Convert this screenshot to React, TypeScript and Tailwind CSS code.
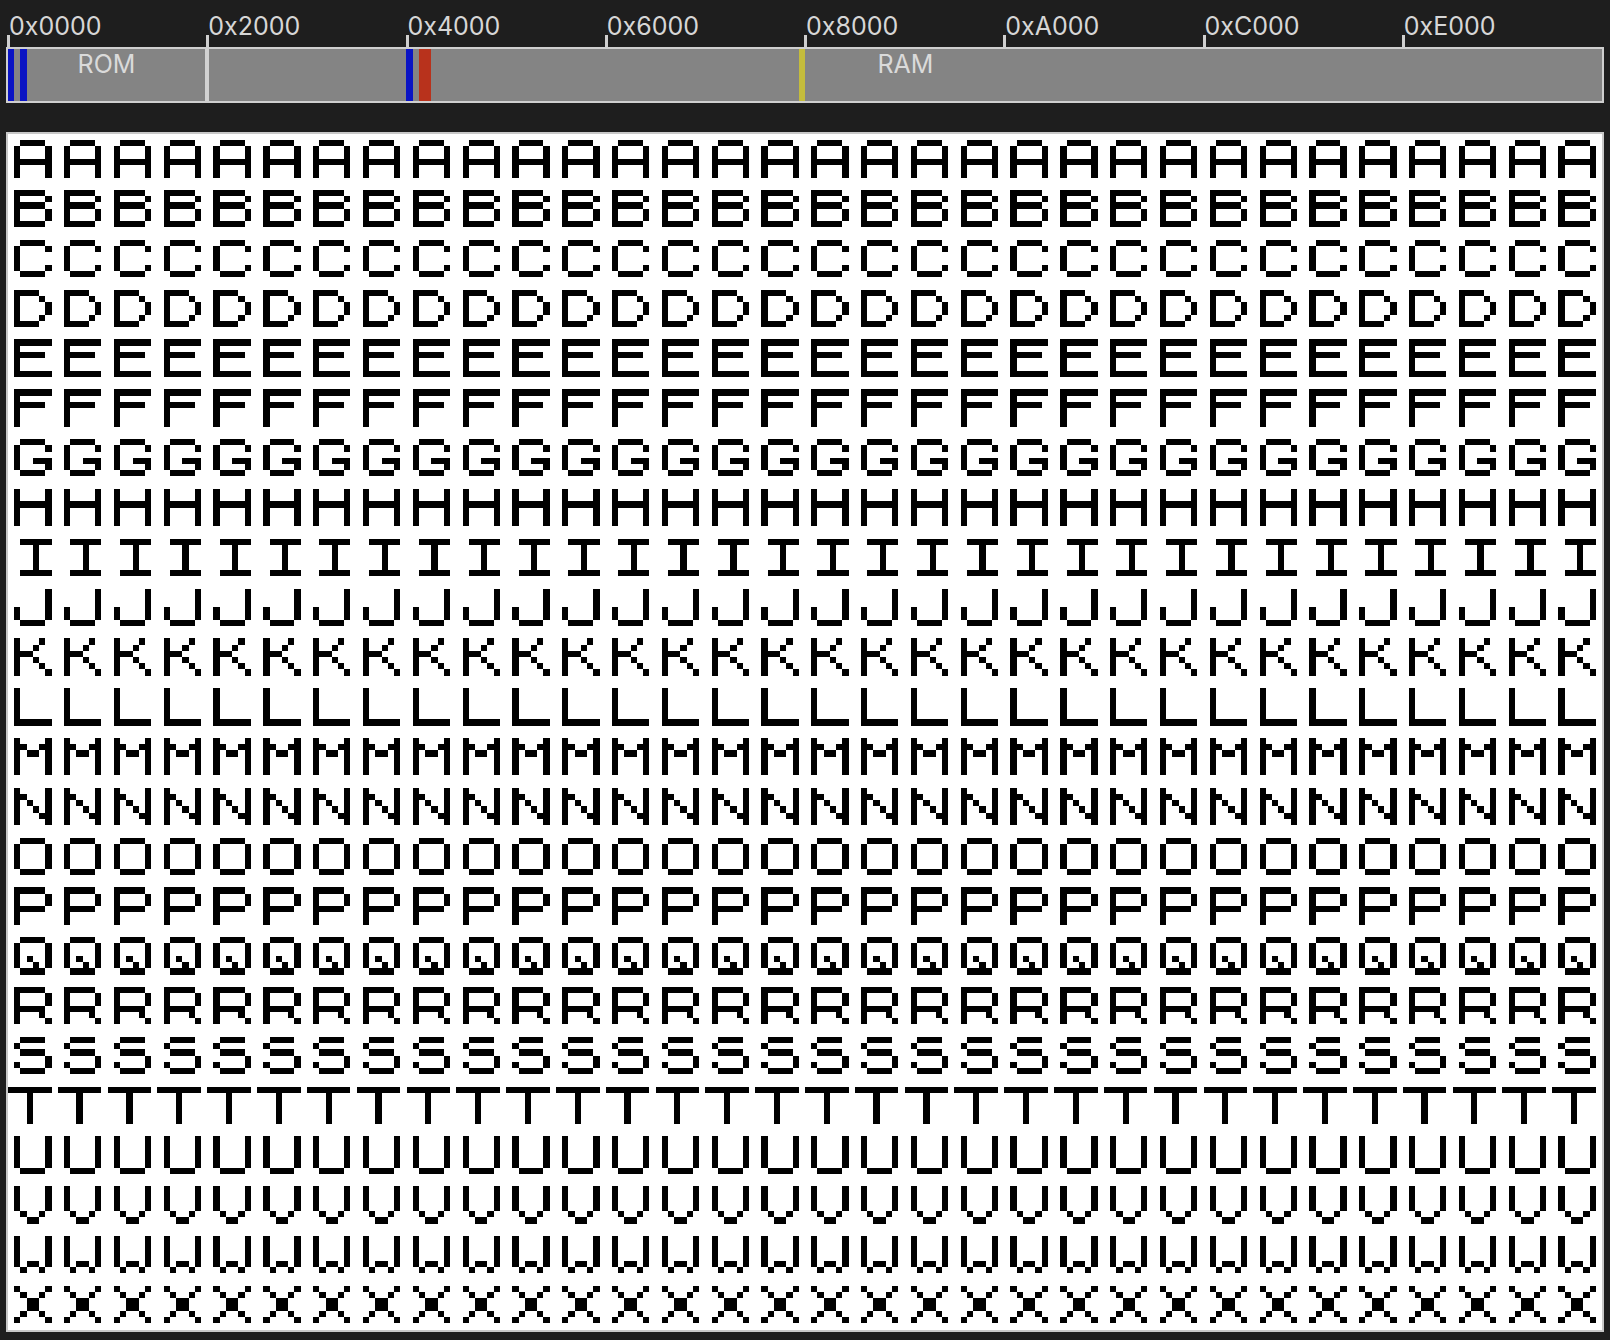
import React from "react";

// ZX Spectrum ROM character bitmaps (8x8), rows top to bottom
const FONT: Record<string, number[]> = {
  A: [0x00, 0x3c, 0x42, 0x42, 0x7e, 0x42, 0x42, 0x00],
  B: [0x00, 0x7c, 0x42, 0x7c, 0x42, 0x42, 0x7c, 0x00],
  C: [0x00, 0x3c, 0x42, 0x40, 0x40, 0x42, 0x3c, 0x00],
  D: [0x00, 0x78, 0x44, 0x42, 0x42, 0x44, 0x78, 0x00],
  E: [0x00, 0x7e, 0x40, 0x7c, 0x40, 0x40, 0x7e, 0x00],
  F: [0x00, 0x7e, 0x40, 0x7c, 0x40, 0x40, 0x40, 0x00],
  G: [0x00, 0x3c, 0x42, 0x40, 0x4e, 0x42, 0x3c, 0x00],
  H: [0x00, 0x42, 0x42, 0x7e, 0x42, 0x42, 0x42, 0x00],
  I: [0x00, 0x3e, 0x08, 0x08, 0x08, 0x08, 0x3e, 0x00],
  J: [0x00, 0x02, 0x02, 0x02, 0x42, 0x42, 0x3c, 0x00],
  K: [0x00, 0x44, 0x48, 0x70, 0x48, 0x44, 0x42, 0x00],
  L: [0x00, 0x40, 0x40, 0x40, 0x40, 0x40, 0x7e, 0x00],
  M: [0x00, 0x42, 0x66, 0x5a, 0x42, 0x42, 0x42, 0x00],
  N: [0x00, 0x42, 0x62, 0x52, 0x4a, 0x46, 0x42, 0x00],
  O: [0x00, 0x3c, 0x42, 0x42, 0x42, 0x42, 0x3c, 0x00],
  P: [0x00, 0x7c, 0x42, 0x42, 0x7c, 0x40, 0x40, 0x00],
  Q: [0x00, 0x3c, 0x42, 0x42, 0x52, 0x4a, 0x3c, 0x00],
  R: [0x00, 0x7c, 0x42, 0x42, 0x7c, 0x44, 0x42, 0x00],
  S: [0x00, 0x3c, 0x40, 0x3c, 0x02, 0x42, 0x3c, 0x00],
  T: [0x00, 0xfe, 0x10, 0x10, 0x10, 0x10, 0x10, 0x00],
  U: [0x00, 0x42, 0x42, 0x42, 0x42, 0x42, 0x3c, 0x00],
  V: [0x00, 0x42, 0x42, 0x42, 0x42, 0x24, 0x18, 0x00],
  W: [0x00, 0x42, 0x42, 0x42, 0x42, 0x5a, 0x24, 0x00],
  X: [0x00, 0x42, 0x24, 0x18, 0x18, 0x24, 0x42, 0x00],
};

const LETTERS = "ABCDEFGHIJKLMNOPQRSTUVWX".split("");
const COLS = 32;

function glyphRects(bytes: number[]) {
  const rects: React.ReactElement[] = [];
  bytes.forEach((b, y) => {
    let x = 0;
    while (x < 8) {
      if (b & (0x80 >> x)) {
        const s = x;
        while (x < 8 && b & (0x80 >> x)) x++;
        rects.push(<rect key={`${y}-${s}`} x={s} y={y} width={x - s} height={1} />);
      } else {
        x++;
      }
    }
  });
  return rects;
}

const RULER = ["0x0000", "0x2000", "0x4000", "0x6000", "0x8000", "0xA000", "0xC000", "0xE000"];

const MARKERS: { left: number; width: number; color: string }[] = [
  { left: 0, width: 6, color: "#0a14c4" },
  { left: 12, width: 7, color: "#0a14c4" },
  { left: 398, width: 7, color: "#0a14c4" },
  { left: 411, width: 12, color: "#b8321c" },
  { left: 791, width: 6, color: "#c4bc3c" },
];

function Screen() {
  return (
    <svg
      viewBox="0 0 256 192"
      className="block w-full h-auto"
      shapeRendering="crispEdges"
      role="img"
      aria-label="Screen"
    >
      <defs>
        {LETTERS.map((ch) => (
          <g key={ch} id={`glyph-${ch}`}>
            {glyphRects(FONT[ch])}
          </g>
        ))}
      </defs>
      <rect x={0} y={0} width={256} height={192} fill="#ffffff" />
      <g fill="#000000">
        {LETTERS.map((ch, r) =>
          Array.from({ length: COLS }).map((_, c) => (
            <use key={`${r}-${c}`} href={`#glyph-${ch}`} x={c * 8} y={r * 8} />
          ))
        )}
      </g>
    </svg>
  );
}

export default function App() {
  return (
    <div
      className="min-h-screen w-full bg-[#1e1e1e] px-[6px] pb-[8px]"
      style={{ fontFamily: "Inter, 'Liberation Sans', sans-serif" }}
    >
      {/* Address ruler */}
      <div className="grid grid-cols-8 px-[2px] pt-[17px]">
        {RULER.map((label) => (
          <div key={label} className="flex flex-col items-start">
            <span className="ml-[1px] h-[18px] text-[25px] leading-[18px] text-[#d6d6d6] whitespace-nowrap">
              {label}
            </span>
            <span className="-ml-[1px] h-[12px] w-[3px] bg-[#cfcfcf]" />
          </div>
        ))}
      </div>

      {/* Memory map bar */}
      <div className="relative flex h-[56px] border-2 border-[#cfcfcf] bg-[#848484]">
        <div className="flex w-[197px] justify-center">
          <span className="text-[25px] leading-[30px] text-[#dadada]">ROM</span>
        </div>
        <div className="w-[4px] bg-[#d2d2d2]" />
        <div className="flex flex-1 justify-center">
          <span className="text-[25px] leading-[30px] text-[#dadada]">RAM</span>
        </div>
        {MARKERS.map((m, i) => (
          <div
            key={i}
            className="absolute top-0 bottom-0"
            style={{ left: m.left, width: m.width, backgroundColor: m.color }}
          />
        ))}
      </div>

      {/* Display */}
      <div className="mt-[29px] border-2 border-[#c8c8c8] bg-white">
        <Screen />
      </div>
    </div>
  );
}
